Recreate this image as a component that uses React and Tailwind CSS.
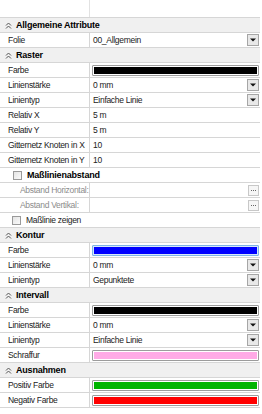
import React from "react";

const Chevron = () => (
  <svg width="7" height="7" viewBox="0 0 7 7" className="shrink-0">
    <path d="M1 3.5 L3.5 1 L6 3.5" fill="none" stroke="#555" strokeWidth="1" />
    <path d="M1 6.5 L3.5 4 L6 6.5" fill="none" stroke="#555" strokeWidth="1" />
  </svg>
);

const DropBtn = () => (
  <div className="ml-auto w-[12px] h-[12px] shrink-0 border border-[#a6a6a6] bg-[#e8e8e8] flex items-center justify-center">
    <svg width="6" height="4" viewBox="0 0 6 4">
      <path d="M0 0.5 H6 L3 3.5 Z" fill="#111" />
    </svg>
  </div>
);

const DotsBtn = () => (
  <div className="ml-auto w-[11px] h-[11px] shrink-0 border border-[#c8c8c8] bg-[#f6f6f6] flex items-center justify-center gap-[1px]">
    <span className="w-[1px] h-[1px] bg-[#666]" />
    <span className="w-[1px] h-[1px] bg-[#666]" />
    <span className="w-[1px] h-[1px] bg-[#666]" />
  </div>
);

const Swatch = ({ color, focus }) => (
  <div
    className={
      "w-full h-[11px] rounded-[1px] p-[1px] " +
      (focus ? "border border-[#7db3e8] bg-[#d6e8fa]" : "border border-[#9c9c9c] bg-white")
    }
  >
    <div className="w-full h-full" style={{ backgroundColor: color }} />
  </div>
);

const Header = ({ title }) => (
  <div className="flex h-[15px] items-center bg-[#f0f0f0] border-b border-[#d6d6d6]">
    <div className="ml-[5px]">
      <Chevron />
    </div>
    <span className="ml-[4px] font-bold text-[9px] tracking-[-0.2px]">{title}</span>
  </div>
);

const Row = ({ label, children, disabled, indent }) => (
  <div className="flex h-[15px] border-b border-[#d6d6d6]">
    <div
      className={
        "w-[90px] shrink-0 border-r border-[#d6d6d6] flex items-center whitespace-nowrap overflow-hidden " +
        (indent ? "pl-[20px] " : "pl-[8px] ") +
        (disabled ? "text-[#8c8c8c]" : "text-[#222]")
      }
    >
      {label}
    </div>
    <div className="flex-1 flex items-center pl-[2px] pr-[1px] min-w-0">{children}</div>
  </div>
);

const Checkbox = () => (
  <span className="w-[9px] h-[9px] shrink-0 border border-[#9a9a9a] bg-gradient-to-br from-[#e4e4e4] to-[#fafafa]" />
);

const CheckRow = ({ label, bold, indent }) => (
  <div className="flex h-[15px] border-b border-[#d6d6d6] items-center">
    <div className={"flex items-center gap-[5px] " + indent}>
      <Checkbox />
      <span className={bold ? "font-bold text-[9px] tracking-[-0.2px]" : "text-[#222]"}>{label}</span>
    </div>
  </div>
);

const Val = ({ children }) => <span className="pl-[1px] text-[#222] whitespace-nowrap">{children}</span>;

export default function App() {
  return (
    <div className="w-[262px] h-[414px] bg-white overflow-hidden text-[8.5px] tracking-[-0.3px] leading-none text-black font-['Liberation_Sans',Arial,sans-serif]">
      <div className="w-[260px]">
        <div className="flex h-[18px] border-b border-[#d6d6d6]">
          <div className="w-[90px] border-r border-[#e2e2e2]" />
          <div className="flex-1" />
        </div>

        <Header title="Allgemeine Attribute" />
        <Row label="Folie">
          <Val>00_Allgemein</Val>
          <DropBtn />
        </Row>

        <Header title="Raster" />
        <Row label="Farbe">
          <Swatch color="#000000" />
        </Row>
        <Row label="Linienstärke">
          <Val>0 mm</Val>
          <DropBtn />
        </Row>
        <Row label="Linientyp">
          <Val>Einfache Linie</Val>
          <DropBtn />
        </Row>
        <Row label="Relativ X">
          <Val>5 m</Val>
        </Row>
        <Row label="Relativ Y">
          <Val>5 m</Val>
        </Row>
        <Row label="Gitternetz Knoten in X">
          <Val>10</Val>
        </Row>
        <Row label="Gitternetz Knoten in Y">
          <Val>10</Val>
        </Row>
        <CheckRow label="Maßlinienabstand" bold indent="pl-[13px]" />
        <Row label="Abstand Horizontal:" disabled indent>
          <DotsBtn />
        </Row>
        <Row label="Abstand Vertikal:" disabled indent>
          <DotsBtn />
        </Row>
        <CheckRow label="Maßlinie zeigen" indent="pl-[12px]" />

        <Header title="Kontur" />
        <Row label="Farbe">
          <Swatch color="#0000ff" focus />
        </Row>
        <Row label="Linienstärke">
          <Val>0 mm</Val>
          <DropBtn />
        </Row>
        <Row label="Linientyp">
          <Val>Gepunktete</Val>
          <DropBtn />
        </Row>

        <Header title="Intervall" />
        <Row label="Farbe">
          <Swatch color="#000000" />
        </Row>
        <Row label="Linienstärke">
          <Val>0 mm</Val>
          <DropBtn />
        </Row>
        <Row label="Linientyp">
          <Val>Einfache Linie</Val>
          <DropBtn />
        </Row>
        <Row label="Schraffur">
          <Swatch color="#ffaae6" />
        </Row>

        <Header title="Ausnahmen" />
        <Row label="Positiv Farbe">
          <Swatch color="#00b400" />
        </Row>
        <Row label="Negativ Farbe">
          <Swatch color="#ff0000" />
        </Row>
      </div>
    </div>
  );
}
